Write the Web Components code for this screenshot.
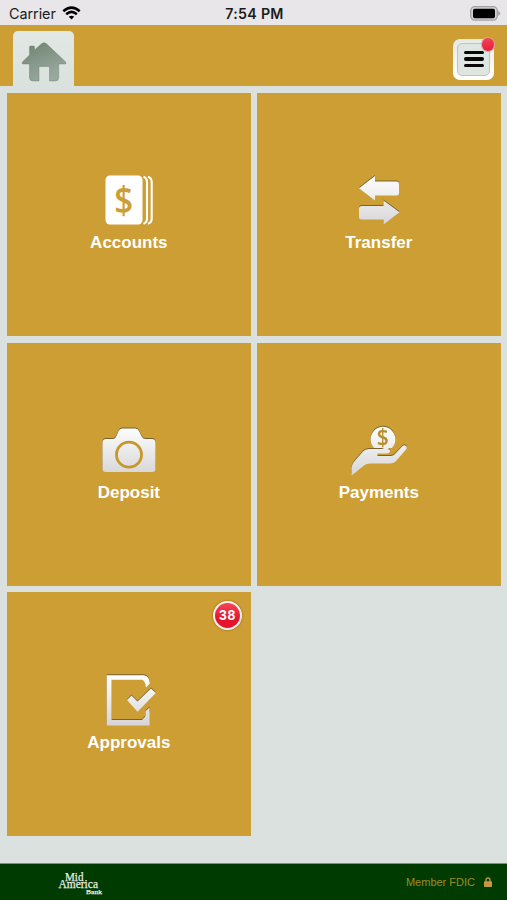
<!DOCTYPE html>
<html lang="en"><head><meta charset="utf-8"><title>Mid America Bank</title>
<style>html,body{margin:0;height:100%}body{background:#dae1de;overflow:hidden;font-family:"Liberation Sans",Arial,sans-serif}</style>
</head><body>
<bank-app></bank-app>
<script>
const define=(name,html)=>customElements.define(name,class extends HTMLElement{
  constructor(){super();const t=document.createElement('template');t.innerHTML=html;
    this.attachShadow({mode:'open'}).append(t.content.cloneNode(true));}
});

define('status-bar',`<style>
:host{display:grid;grid-template-columns:1fr auto 1fr;align-items:center;height:25.3px;padding:0 6px 0 9px;background:#e8e6e8;color:#1b1b1b;font:14.4px/25px Inter,sans-serif;box-sizing:border-box}
.l{display:flex;align-items:center;gap:6px;padding-top:1px}.l span{letter-spacing:-.05px}.l svg{margin-top:-2px}.t{font-weight:600;font-size:14.2px;letter-spacing:.3px;margin-right:1px}.r{justify-self:end;display:flex}svg{display:block}
</style>
<div class="l"><span>Carrier</span><svg width="19" height="14" viewBox="0 0 19 14" fill="none" stroke="#000" stroke-width="2.6"><path d="M1.3 5.2Q9.5-2 17.7 5.2"/><path d="M4.2 8.2Q9.5 3.6 14.8 8.2"/><path d="M9.5 13.5L6.8 10.8Q9.5 8.6 12.2 10.8Z" fill="#000" stroke="none"/></svg></div>
<div class="t">7:54 PM</div>
<div class="r"><svg width="31" height="15" viewBox="0 0 31 15"><rect x=".7" y=".7" width="26.6" height="13.4" rx="4" fill="#d2d0d2" stroke="#a3a1a3" stroke-width="1.3"/><rect x="3" y="2.8" width="22" height="9.4" rx="1.8"/><path d="M28.2 4.8Q32.2 7.4 28.2 10Z" fill="#a3a1a3"/></svg></div>`);

define('home-tab',`<style>
:host{display:flex;justify-content:center;width:61.5px;height:55.2px;border-radius:5px 5px 0 0;background:linear-gradient(#e2e8e4,#dae2dd)}
svg{display:block;margin:10.5px 0 0 1.5px}</style>
<svg width="46" height="42" viewBox="0 0 46 42"><defs><linearGradient id="g" x2=".5" y2="1"><stop stop-color="#70836f"/><stop offset="1" stop-color="#98aaa0"/></linearGradient></defs>
<path fill="url(#g)" stroke="#65776a" stroke-width=".4" d="M8.5 14V6Q8.5 5 9.5 5H12.5Q13.5 5 13.5 6V9L20.8 2.6Q23 .8 25.2 2.6L44.5 20.8Q46 23 43.5 23H37.7V36.5Q37.7 40 34.2 40H28.5V25.5H18V40H12Q8.5 40 8.5 36.5V23H2.5Q0 23 1.6 20.8Z"/></svg>`);

define('menu-button',`<style>
:host{display:block;position:relative;box-sizing:border-box;width:41px;height:41px;border-radius:7px;padding:4px;background:linear-gradient(#e4eae6,#fff 90%)}
.i{display:flex;flex-direction:column;align-items:center;justify-content:center;gap:3.2px;box-sizing:border-box;height:33px;border:1px solid #bcc5c0;border-radius:5px;background:#dfe5e1}
b{display:block;width:20px;height:3.4px;border-radius:2px;background:#080808}
.d{position:absolute;right:0;top:-.5px;width:12.5px;height:12.5px;border-radius:50%;background:linear-gradient(#f04458,#e81d39);box-shadow:0 0 0 1px #dca1a0}</style>
<div class="i"><b></b><b></b><b></b></div><span class="d"></span>`);

define('app-header',`<style>:host{display:flex;justify-content:space-between;align-items:flex-end;height:60.7px;background:#cc9e34;padding:0 13px 0 12.5px;box-sizing:border-box}menu-button{margin-bottom:6.3px}</style><home-tab></home-tab><menu-button></menu-button>`);

define('count-badge',`<style>:host{display:flex;align-items:center;justify-content:center;position:absolute;right:9px;top:9px;width:25px;height:25px;border:2px solid #faece7;border-radius:50%;background:linear-gradient(#f0475a,#e5132c 65%);color:#fff;font:bold 14px/25px "Liberation Sans",sans-serif;letter-spacing:.8px;text-indent:.8px;box-shadow:0 0 2px #85561c}</style><slot></slot>`);

define('menu-tile',`<style>:host{display:flex;flex-direction:column;align-items:center;position:relative;background:#cc9e34;color:#fff}
.icon{height:64px;margin-top:75px}.label{font:bold 17px/20px "Liberation Sans",Arial,sans-serif;letter-spacing:0;white-space:nowrap;margin-top:1.6px}</style>
<div class="icon"><slot name="icon"></slot></div><div class="label"><slot></slot></div><slot name="badge"></slot>`);

const art={
accounts:`<rect x="105.5" y="175.5" width="37" height="49" rx="4.5" fill="#fff"/><path d="M143.5 176.8Q147 178 147 182V218.5Q147 222.5 143.5 223.8M148 176.8Q151.7 178 151.7 182V218.5Q151.7 222.5 148 223.8" fill="none" stroke="#fff" stroke-width="2.1"/><text transform="translate(123.8 214) scale(1.05 1.2)" text-anchor="middle" font-family="Open Sans" font-weight="600" font-size="31.5" fill="#cc9e34">$</text>`,
transfer:`<path d="M359 188.3L375 176V181.6H396.5Q399 181.6 399 184V193Q399 195.5 396.5 195.5H375V200.5Z"/><path d="M399.5 212.3L383.5 200.5V206H361.5Q359 206 359 208.5V217Q359 219.5 361.5 219.5H383.5V224.6Z"/>`,
deposit:`<path d="M106 189H112.5Q115 189 116 187L118.5 181Q119.8 178.5 122 178.5H135.5Q138 178.5 139 181L142 187Q143 189 145.5 189H152Q155.5 189 155.5 192.5V218.5Q155.5 222 152 222H106Q102.5 222 102.5 218.5V192.5Q102.5 189 106 189Z"/><circle cx="129" cy="204.7" r="12.5" fill="none" stroke="#c99628" stroke-width="2.8"/>`,
payments:`<path d="M374.2 198A12.4 12.4 0 1 1 391.8 198H389.5L386 200L382 198Z"/><text transform="translate(382.8 195.5) scale(1.08 1.2)" text-anchor="middle" font-family="Open Sans" font-weight="600" font-size="19.5" fill="#b98c2a" stroke="none">$</text><path d="M351.5 219Q351.5 214 355.5 210L363 201.5Q365 199 369 199H387Q390.5 199 390 201.5Q389.5 203.5 387 203.5H377.5V206H391Q393 206 395 204L402 196.5Q404 194.5 406 196Q407.5 197.5 406 199.5L396.5 210.5Q394 213.5 390 213.5H370Q366.5 213.5 364 215.5L353 224.5L351.5 225Z"/>`,
approvals:`<g transform="translate(0 1)"><path fill-rule="evenodd" d="M106.7 175.2H144Q150 176.5 149.8 183.5L146 187.5Q145 180.5 142 179.8H111.6V220H145.5V211.2L149.5 207.5V225.5H106.7Z"/><path d="M127 200L131.5 195.5L137.5 201.5L151 188.5L155.8 193L137.5 211.8Z"/><path d="M140.5 221.5L149.5 212V225Z"/></g>`
};
class TileArt extends HTMLElement{constructor(){super();const k=this.getAttribute('kind');const x=k==='transfer'||k==='payments'?329:79;
this.attachShadow({mode:'open'}).innerHTML=`<style>:host{display:block}svg{display:block}.shade{fill:url(#silver);filter:drop-shadow(0 -.8px .3px #76612f)}</style><svg width="100" height="64" viewBox="${x} 168 100 64"><defs><linearGradient id="silver" gradientUnits="userSpaceOnUse" x1="0" x2="0" y1="176" y2="226"><stop stop-color="#fff"/><stop offset="1" stop-color="#d5d5d7"/></linearGradient></defs><g class="${k==='accounts'?'':'shade'}">${art[k]}</g></svg>`;}}
customElements.define('tile-art',TileArt);

define('tile-grid',`<style>:host{display:grid;grid-template-columns:243.7px 243.7px;grid-auto-rows:243.5px;gap:6.3px;padding:6.9px 6px 0 7px}</style>
<menu-tile><tile-art slot="icon" kind="accounts"></tile-art>Accounts</menu-tile>
<menu-tile><tile-art slot="icon" kind="transfer"></tile-art>Transfer</menu-tile>
<menu-tile><tile-art slot="icon" kind="deposit"></tile-art>Deposit</menu-tile>
<menu-tile><tile-art slot="icon" kind="payments"></tile-art>Payments</menu-tile>
<menu-tile><tile-art slot="icon" kind="approvals"></tile-art>Approvals<count-badge slot="badge">38</count-badge></menu-tile>`);

define('bank-logo',`<style>:host{display:block;width:48px;height:34px}svg{display:block;overflow:visible}</style><svg width="48" height="34" viewBox="57 864 48 34" fill="#e9f0e6" stroke="#e9f0e6" stroke-width=".25" font-family="Liberation Serif"><text x="65" y="880" font-size="13" textLength="18.5" lengthAdjust="spacingAndGlyphs">Mid</text><text x="58.5" y="887" font-size="13" textLength="39.5" lengthAdjust="spacingAndGlyphs">America</text><text x="86" y="892.5" font-size="7" textLength="16" lengthAdjust="spacingAndGlyphs">Bank</text></svg>`);

define('app-footer',`<style>:host{display:flex;align-items:center;justify-content:space-between;box-sizing:border-box;height:37px;border-top:1px solid #96943b;background:#003b02;padding:0 15px 0 57px;color:#a18b20}.m{display:flex;align-items:center;gap:9px;font:11px/14px "Liberation Sans",sans-serif;letter-spacing:0}svg{display:block}</style>
<bank-logo></bank-logo><div class="m"><span>Member FDIC</span><svg width="8" height="10" viewBox="0 0 8 10"><path d="M2 5V3Q2 .8 4 .8Q6 .8 6 3V5" fill="none" stroke="#c29a45" stroke-width="1.3"/><rect y="4.3" width="8" height="5.7" rx=".8" fill="#c7983f"/></svg></div>`);

define('bank-app',`<style>:host{display:flex;flex-direction:column;height:100vh;background:#dae1de}tile-grid{flex:1}</style><status-bar></status-bar><app-header></app-header><tile-grid></tile-grid><app-footer></app-footer>`);
</script></body></html>
